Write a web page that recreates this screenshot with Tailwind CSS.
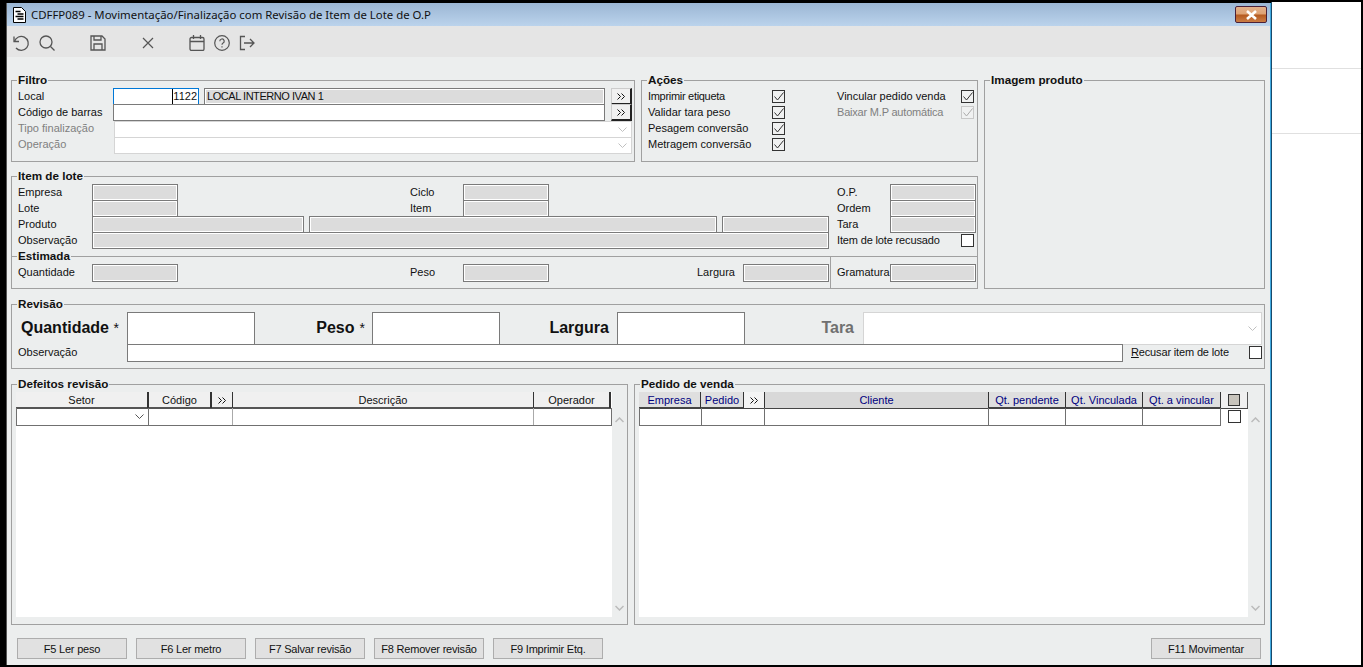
<!DOCTYPE html>
<html lang="pt-BR">
<head>
  <meta charset="UTF-8">
  <title>CDFFP089</title>
  <script src="https://cdn.jsdelivr.net/npm/@tailwindcss/browser@4"></script>
</head>
<body class="h-screen overflow-hidden bg-black pt-[3px] pb-[2px] pl-[6px] pr-[2px] font-['Liberation_Sans',sans-serif] text-[11px] text-[#111]">
  <div class="flex h-full">
    <!-- Window -->
    <div class="flex flex-col w-[1265px] h-full bg-[#eceeee] border-l border-[#555] border-r border-r-[#3fa9e0]">
      <!-- Title bar -->
      <div class="flex items-center h-[23px] shrink-0 bg-gradient-to-b from-[#9bb6d4] to-[#bbd3ec] pl-[6px] pr-[3px]">
        <svg class="w-[13px] h-[16px] mr-[5px]" viewBox="0 0 13 16"><path d="M.5.500h8l4 4v11h-12z" fill="#fff" stroke="#000"/><path d="M2.500 4.500h5M4.500 7h6M2.500 9.500h8M4.500 12h6" stroke="#000" stroke-width="1.300"/></svg>
        <span class="font-['Noto_Sans',sans-serif] text-[11.4px] text-[#111]">CDFFP089 - Movimentação/Finalização com Revisão de Item de Lote de O.P</span>
        <div class="ml-auto flex items-center justify-center w-[32px] h-[17px] rounded-[2px] border border-[#4a2038] bg-[linear-gradient(#e2b08c_0%,#dfa273_48%,#b4591f_52%,#cb7d45_100%)]">
          <svg class="w-[13px] h-[10px]" viewBox="0 0 13 10"><path d="M2 1l9 8M11 1l-9 8" stroke="#fff" stroke-width="2.600"/></svg>
        </div>
      </div>
      <!-- Toolbar -->
      <div class="flex items-center h-[31px] shrink-0 bg-[#e5e5e5] pl-[5px] pt-[2px] text-[#555]">
        <svg class="w-[18px] h-[18px]" viewBox="0 0 18 18" fill="none" stroke="currentColor" stroke-width="1.300"><path d="M2 2.500v5h5"/><path d="M2.500 7.500A7 7 0 1 1 4 14"/></svg>
        <svg class="w-[18px] h-[18px] ml-[8px]" viewBox="0 0 18 18" fill="none" stroke="currentColor" stroke-width="1.300"><circle cx="8" cy="8" r="6"/><path d="M12.500 12.500l4 4"/></svg>
        <svg class="w-[16px] h-[16px] ml-[34px]" viewBox="0 0 16 16" fill="none" stroke="currentColor" stroke-width="1.300"><path d="M1 1h11l3 3v11H1z"/><path d="M4 1v4h7V1M4 15V9h8v6"/></svg>
        <svg class="w-[14px] h-[14px] ml-[35px]" viewBox="0 0 14 14" fill="none" stroke="currentColor" stroke-width="1.200"><path d="M2 2l10 10M12 2L2 12"/></svg>
        <svg class="w-[16px] h-[16px] ml-[34px]" viewBox="0 0 16 16" fill="none" stroke="currentColor" stroke-width="1.300"><rect x="1" y="2.500" width="14" height="13" rx="1.500"/><path d="M1 6.500h14M4.500 0v4M11.500 0v4"/></svg>
        <svg class="w-[16px] h-[16px] ml-[9px]" viewBox="0 0 16 16" fill="none" stroke="currentColor" stroke-width="1.200"><circle cx="8" cy="8" r="7.300"/><path d="M5.800 6.200a2.200 2.200 0 1 1 3.300 1.900c-.7.400-1.100.8-1.100 1.700"/><path d="M8 11.300v1.200"/></svg>
        <svg class="w-[16px] h-[16px] ml-[9px]" viewBox="0 0 16 16" fill="none" stroke="currentColor" stroke-width="1.300"><path d="M6 1.500H1.500v13H6"/><path d="M5 8h10M11 4l4 4-4 4"/></svg>
      </div>

      <!-- Main -->
      <div class="flex-1 pt-[23px] pl-[4px] flex flex-col">
        <div class="flex gap-[6px]">
          <div class="w-[967px]">
            <div class="flex gap-[6px]">
              <!-- Filtro -->
              <div class="relative w-[624px] h-[82px] border border-[#a0a0a0] pt-[7px] pl-[6px]">
                <span class="absolute -top-[8px] left-[5px] bg-[#eceeee] px-px font-bold text-[11.700px] leading-[13px]">Filtro</span>
                <div class="flex h-[16px] items-start">
                  <span class="w-[95px] leading-[16px]">Local</span>
                  <div class="flex justify-end w-[86px] h-[17px] bg-white border border-[#0078d7] pr-[1px] leading-[15px]"><span class="border-l border-black">1122</span></div>
                  <div class="ml-[5px] w-[401px] h-[17px] bg-[#dcdcdc] border border-[#7a7a7a] shadow-[inset_0_0_0_1px_#fff] pl-[2px] leading-[15px] tracking-[-0.450px]">LOCAL INTERNO IVAN 1</div>
                  <div class="flex items-center justify-center ml-[6px] w-[21px] h-[17px] bg-[#f0f0f0] border-t border-l border-[#ccc] border-r-2 border-b-2 border-r-[#222] border-b-[#222]">
                    <svg class="w-[8px] h-[7px]" viewBox="0 0 8 7" fill="none" stroke="#111"><path d="M.5.500l3 3-3 3M4.500.500l3 3-3 3"/></svg>
                  </div>
                </div>
                <div class="flex h-[16px] items-start">
                  <span class="w-[95px] leading-[16px]">Código de barras</span>
                  <div class="w-[492px] h-[17px] bg-white border border-[#7a7a7a]"></div>
                  <div class="flex items-center justify-center ml-[6px] w-[21px] h-[17px] bg-[#f0f0f0] border-t border-l border-[#ccc] border-r-2 border-b-2 border-r-[#222] border-b-[#222]">
                    <svg class="w-[8px] h-[7px]" viewBox="0 0 8 7" fill="none" stroke="#111"><path d="M.5.500l3 3-3 3M4.500.500l3 3-3 3"/></svg>
                  </div>
                </div>
                <div class="flex h-[16px] mt-px items-start text-[#808080]">
                  <span class="w-[96px] leading-[14px]">Tipo finalização</span>
                  <div class="flex items-center justify-end w-[518px] h-[17px] bg-white border border-[#d5d5d5] pr-[4px]">
                    <svg class="w-[9px] h-[5px]" viewBox="0 0 9 5" fill="none" stroke="#c0c0c0"><path d="M.5.500l4 4 4-4"/></svg>
                  </div>
                </div>
                <div class="flex h-[16px] items-start text-[#808080]">
                  <span class="w-[96px] leading-[14px]">Operação</span>
                  <div class="flex items-center justify-end w-[518px] h-[17px] bg-white border border-[#d5d5d5] pr-[4px]">
                    <svg class="w-[9px] h-[5px]" viewBox="0 0 9 5" fill="none" stroke="#c0c0c0"><path d="M.5.500l4 4 4-4"/></svg>
                  </div>
                </div>
              </div>
              <!-- Acoes -->
              <div class="relative w-[337px] h-[82px] border border-[#a0a0a0] pt-[7px] pl-[6px]">
                <span class="absolute -top-[8px] left-[5px] bg-[#eceeee] px-px font-bold text-[11.700px] leading-[13px]">Ações</span>
                <div class="flex h-[16px] items-center">
                  <span class="w-[124px] tracking-[-0.300px]">Imprimir etiqueta</span>
                  <div class="flex items-center justify-center w-[13px] h-[13px] bg-[#f0f1f1] border border-[#333]"><svg class="w-[10px] h-[9px]" viewBox="0 0 10 9" fill="none" stroke="#333"><path d="M.5 4.500l3 3.500L9.500.500"/></svg></div>
                  <span class="ml-[52px] w-[124px]">Vincular pedido venda</span>
                  <div class="flex items-center justify-center w-[13px] h-[13px] bg-[#f0f1f1] border border-[#333]"><svg class="w-[10px] h-[9px]" viewBox="0 0 10 9" fill="none" stroke="#333"><path d="M.5 4.500l3 3.500L9.500.500"/></svg></div>
                </div>
                <div class="flex h-[16px] items-center">
                  <span class="w-[124px]">Validar tara peso</span>
                  <div class="flex items-center justify-center w-[13px] h-[13px] bg-[#f0f1f1] border border-[#333]"><svg class="w-[10px] h-[9px]" viewBox="0 0 10 9" fill="none" stroke="#333"><path d="M.5 4.500l3 3.500L9.500.500"/></svg></div>
                  <span class="ml-[52px] w-[124px] text-[#808080] tracking-[-0.200px]">Baixar M.P automática</span>
                  <div class="flex items-center justify-center w-[13px] h-[13px] bg-[#f0f1f1] border border-[#c8c8c8]"><svg class="w-[10px] h-[9px]" viewBox="0 0 10 9" fill="none" stroke="#aaa"><path d="M.5 4.500l3 3.500L9.500.500"/></svg></div>
                </div>
                <div class="flex h-[16px] items-center">
                  <span class="w-[124px]">Pesagem conversão</span>
                  <div class="flex items-center justify-center w-[13px] h-[13px] bg-[#f0f1f1] border border-[#333]"><svg class="w-[10px] h-[9px]" viewBox="0 0 10 9" fill="none" stroke="#333"><path d="M.5 4.500l3 3.500L9.500.500"/></svg></div>
                </div>
                <div class="flex h-[16px] items-center">
                  <span class="w-[124px]">Metragem conversão</span>
                  <div class="flex items-center justify-center w-[13px] h-[13px] bg-[#f0f1f1] border border-[#333]"><svg class="w-[10px] h-[9px]" viewBox="0 0 10 9" fill="none" stroke="#333"><path d="M.5 4.500l3 3.500L9.500.500"/></svg></div>
                </div>
              </div>
            </div>

            <!-- Item de lote -->
            <div class="relative mt-[14px] h-[113px] border border-[#a0a0a0]">
              <span class="absolute -top-[8px] left-[5px] bg-[#eceeee] px-px font-bold text-[11.700px] leading-[13px]">Item de lote</span>
              <div class="pt-[7px] pl-[6px] h-[79px]">
                <div class="flex h-[16px] items-start">
                  <span class="w-[74px] leading-[16px]">Empresa</span>
                  <div class="w-[86px] h-[17px] bg-[#dcdcdc] border border-[#7a7a7a] shadow-[inset_0_0_0_1px_#fff]"></div>
                  <span class="ml-[232px] w-[53px] leading-[16px]">Ciclo</span>
                  <div class="w-[86px] h-[17px] bg-[#dcdcdc] border border-[#7a7a7a] shadow-[inset_0_0_0_1px_#fff]"></div>
                  <span class="ml-[288px] w-[53px] leading-[16px]">O.P.</span>
                  <div class="w-[86px] h-[17px] bg-[#dcdcdc] border border-[#7a7a7a] shadow-[inset_0_0_0_1px_#fff]"></div>
                </div>
                <div class="flex h-[16px] items-start">
                  <span class="w-[74px] leading-[16px]">Lote</span>
                  <div class="w-[86px] h-[17px] bg-[#dcdcdc] border border-[#7a7a7a] shadow-[inset_0_0_0_1px_#fff]"></div>
                  <span class="ml-[232px] w-[53px] leading-[16px]">Item</span>
                  <div class="w-[86px] h-[17px] bg-[#dcdcdc] border border-[#7a7a7a] shadow-[inset_0_0_0_1px_#fff]"></div>
                  <span class="ml-[288px] w-[53px] leading-[16px]">Ordem</span>
                  <div class="w-[86px] h-[17px] bg-[#dcdcdc] border border-[#7a7a7a] shadow-[inset_0_0_0_1px_#fff]"></div>
                </div>
                <div class="flex h-[16px] items-start">
                  <span class="w-[74px] leading-[16px]">Produto</span>
                  <div class="w-[212px] h-[17px] bg-[#dcdcdc] border border-[#7a7a7a] shadow-[inset_0_0_0_1px_#fff]"></div>
                  <div class="ml-[5px] w-[408px] h-[17px] bg-[#dcdcdc] border border-[#7a7a7a] shadow-[inset_0_0_0_1px_#fff]"></div>
                  <div class="ml-[5px] w-[107px] h-[17px] bg-[#dcdcdc] border border-[#7a7a7a] shadow-[inset_0_0_0_1px_#fff]"></div>
                  <span class="ml-[8px] w-[53px] leading-[16px]">Tara</span>
                  <div class="w-[86px] h-[17px] bg-[#dcdcdc] border border-[#7a7a7a] shadow-[inset_0_0_0_1px_#fff]"></div>
                </div>
                <div class="flex h-[17px] items-start">
                  <span class="w-[74px] leading-[17px]">Observação</span>
                  <div class="w-[737px] h-[17px] bg-[#dcdcdc] border border-[#7a7a7a] shadow-[inset_0_0_0_1px_#fff]"></div>
                  <span class="ml-[8px] w-[124px] leading-[17px] tracking-[-0.150px]">Item de lote recusado</span>
                  <div class="mt-[2px] w-[13px] h-[13px] bg-white border border-[#333]"></div>
                </div>
              </div>
              <!-- Estimada -->
              <div class="relative flex h-[32px] border-t border-[#a0a0a0]">
                <span class="absolute -top-[8px] left-[5px] bg-[#eceeee] px-px font-bold text-[11.700px] leading-[13px]">Estimada</span>
                <div class="flex items-center w-[819px] border-r border-[#a0a0a0] pl-[6px] pt-px">
                  <span class="w-[74px] pb-[2px]">Quantidade</span>
                  <div class="w-[86px] h-[18px] bg-[#dcdcdc] border border-[#7a7a7a] shadow-[inset_0_0_0_1px_#fff]"></div>
                  <span class="ml-[232px] w-[53px] pb-[2px]">Peso</span>
                  <div class="w-[86px] h-[18px] bg-[#dcdcdc] border border-[#7a7a7a] shadow-[inset_0_0_0_1px_#fff]"></div>
                  <span class="ml-[148px] w-[46px] pb-[2px]">Largura</span>
                  <div class="w-[86px] h-[18px] bg-[#dcdcdc] border border-[#7a7a7a] shadow-[inset_0_0_0_1px_#fff]"></div>
                </div>
                <div class="flex items-center pl-[6px] pt-px">
                  <span class="w-[53px] pb-[2px]">Gramatura</span>
                  <div class="w-[86px] h-[18px] bg-[#dcdcdc] border border-[#7a7a7a] shadow-[inset_0_0_0_1px_#fff]"></div>
                </div>
              </div>
            </div>
          </div>
          <!-- Imagem -->
          <div class="relative w-[281px] h-[209px] border border-[#a0a0a0]">
            <span class="absolute -top-[8px] left-[5px] bg-[#eceeee] px-px font-bold text-[11.700px] leading-[13px]">Imagem produto</span>
          </div>
        </div>

        <!-- Revisao -->
        <div class="relative mt-[15px] w-[1254px] h-[65px] border border-[#a0a0a0] pt-[7px] pl-[6px]">
          <span class="absolute -top-[8px] left-[5px] bg-[#eceeee] px-px font-bold text-[11.700px] leading-[13px]">Revisão</span>
          <div class="flex items-center h-[32px]">
            <span class="w-[109px] pl-[3px] text-[16px] font-bold whitespace-nowrap">Quantidade <span class="text-[14px] font-normal">*</span></span>
            <div class="w-[128px] h-[33px] bg-white border border-[#7a7a7a]"></div>
            <span class="w-[117px] pr-[7px] text-right text-[16px] font-bold">Peso<span class="ml-[5px] text-[14px] font-normal">*</span></span>
            <div class="w-[128px] h-[33px] bg-white border border-[#7a7a7a]"></div>
            <span class="w-[117px] pr-[8px] text-right text-[16px] font-bold">Largura</span>
            <div class="w-[128px] h-[33px] bg-white border border-[#7a7a7a]"></div>
            <span class="w-[118px] pr-[9px] text-right text-[16px] font-bold text-[#707070]">Tara</span>
            <div class="flex items-center justify-end w-[399px] h-[33px] bg-white border border-[#d5d5d5] pr-[4px]">
              <svg class="w-[9px] h-[5px]" viewBox="0 0 9 5" fill="none" stroke="#c0c0c0"><path d="M.5.500l4 4 4-4"/></svg>
            </div>
          </div>
          <div class="flex items-center h-[17px]">
            <span class="w-[109px]">Observação</span>
            <div class="w-[996px] h-[18px] bg-white border border-[#7a7a7a]"></div>
            <span class="ml-[8px] w-[118px] tracking-[-0.150px]"><span class="underline">R</span>ecusar item de lote</span>
            <div class="w-[13px] h-[13px] bg-white border border-[#333]"></div>
          </div>
        </div>

        <!-- Grids -->
        <div class="flex gap-[6px] mt-[15px]">
          <!-- Defeitos -->
          <div class="relative flex w-[617px] h-[241px] border border-[#a0a0a0] pt-[7px] pl-[4px]">
            <span class="absolute -top-[8px] left-[5px] bg-[#eceeee] px-px font-bold text-[11.700px] leading-[13px]">Defeitos revisão</span>
            <div class="w-[596px] h-[225px] bg-white">
              <div class="grid grid-cols-[133px_63px_21px_301px_77px] w-[595px] h-[17px] text-center leading-[16px] bg-[#f0f0f0] border-b-2 border-[#555]">
                <div class="border-r-2 border-[#333]">Setor</div>
                <div class="border-r-2 border-[#333]">Código</div>
                <div class="flex items-center justify-center border-r border-[#333]">
                  <svg class="w-[8px] h-[7px]" viewBox="0 0 8 7" fill="none" stroke="#111"><path d="M.5.500l3 3-3 3M4.500.500l3 3-3 3"/></svg>
                </div>
                <div class="border-r border-[#333]">Descrição</div>
                <div class="border-r-2 border-[#333]">Operador</div>
              </div>
              <div class="grid grid-cols-[133px_84px_301px_78px] h-[18px] border-b border-[#707070] -mt-px">
                <div class="flex items-center justify-end pr-[4px] border-x border-[#707070]">
                  <svg class="w-[9px] h-[5px]" viewBox="0 0 9 5" fill="none" stroke="#555"><path d="M.5.500l4 4 4-4"/></svg>
                </div>
                <div class="border-r border-[#aaa]"></div>
                <div class="border-r border-[#aaa]"></div>
                <div class="border-r border-[#707070]"></div>
              </div>
            </div>
            <div class="flex flex-col items-center justify-between w-[15px] h-[225px] pt-[25px] pb-[6px]">
              <svg class="w-[9px] h-[6px]" viewBox="0 0 9 6" fill="none" stroke="#bbb" stroke-width="1.500"><path d="M.5 5l4-4 4 4"/></svg>
              <svg class="w-[9px] h-[6px]" viewBox="0 0 9 6" fill="none" stroke="#bbb" stroke-width="1.500"><path d="M.5 1l4 4 4-4"/></svg>
            </div>
          </div>
          <!-- Pedido -->
          <div class="relative flex w-[631px] h-[241px] border border-[#a0a0a0] pt-[7px] pl-[4px]">
            <span class="absolute -top-[8px] left-[5px] bg-[#eceeee] px-px font-bold text-[11.700px] leading-[13px]">Pedido de venda</span>
            <div class="w-[609px] h-[225px] bg-white">
              <div class="grid grid-cols-[62px_43px_21px_224px_77px_77px_78px_27px] h-[17px] text-center leading-[16px] text-[#000080] bg-[#dfdfdf] border-b-2 border-[#444]">
                <div class="border-r border-[#333]">Empresa</div>
                <div class="border-r border-[#333]">Pedido</div>
                <div class="flex items-center justify-center border-r border-[#333] bg-[#f4f4f4]">
                  <svg class="w-[8px] h-[7px]" viewBox="0 0 8 7" fill="none" stroke="#111"><path d="M.5.500l3 3-3 3M4.500.500l3 3-3 3"/></svg>
                </div>
                <div class="border-r border-[#333] bg-[#d8d8d8]">Cliente</div>
                <div class="border-r border-[#333]">Qt. pendente</div>
                <div class="border-r border-[#333]">Qt. Vinculada</div>
                <div class="border-r border-[#333]">Qt. a vincular</div>
                <div class="flex justify-center items-start pt-[2px] bg-[#f0f0f0] border-r border-[#555]"><div class="w-[12px] h-[12px] bg-[#c8c4bc] border border-[#333]"></div></div>
              </div>
              <div class="grid grid-cols-[63px_63px_224px_77px_77px_78px_27px] h-[18px] -mt-px">
                <div class="border-x border-b border-[#707070]"></div>
                <div class="border-r border-b border-[#707070]"></div>
                <div class="border-r border-b border-[#707070]"></div>
                <div class="border-r border-b border-[#707070]"></div>
                <div class="border-r border-b border-[#707070]"></div>
                <div class="border-r border-b border-[#707070]"></div>
                <div class="flex justify-center"><div class="mt-[2px] w-[13px] h-[13px] bg-white border border-[#333]"></div></div>
              </div>
            </div>
            <div class="flex flex-col items-center justify-between w-[15px] h-[225px] pt-[25px] pb-[6px]">
              <svg class="w-[9px] h-[6px]" viewBox="0 0 9 6" fill="none" stroke="#bbb" stroke-width="1.500"><path d="M.5 5l4-4 4 4"/></svg>
              <svg class="w-[9px] h-[6px]" viewBox="0 0 9 6" fill="none" stroke="#bbb" stroke-width="1.500"><path d="M.5 1l4 4 4-4"/></svg>
            </div>
          </div>
        </div>

        <!-- Buttons -->
        <div class="flex gap-[9px] mt-[13px] pl-[6px] w-[1250px] tracking-[-0.200px]">
          <button class="w-[110px] h-[21px] pt-px bg-[#e1e1e1] border border-[#adadad]">F5 Ler peso</button>
          <button class="w-[110px] h-[21px] pt-px bg-[#e1e1e1] border border-[#adadad]">F6 Ler metro</button>
          <button class="w-[110px] h-[21px] pt-px bg-[#e1e1e1] border border-[#adadad]">F7 Salvar revisão</button>
          <button class="w-[110px] h-[21px] pt-px bg-[#e1e1e1] border border-[#adadad]">F8 Remover revisão</button>
          <button class="w-[110px] h-[21px] pt-px bg-[#e1e1e1] border border-[#adadad]">F9 Imprimir Etq.</button>
          <button class="ml-auto w-[110px] h-[21px] pt-px bg-[#e1e1e1] border border-[#adadad]">F11 Movimentar</button>
        </div>
      </div>
    </div>

    <!-- Page behind the window -->
    <div class="flex-1 bg-white border-l border-[#1a4a6a] -mt-px">
      <div class="h-[67px] border-b border-[#e0e0e0]"></div>
      <div class="h-[65px] border-b border-[#e0e0e0]"></div>
    </div>
  </div>
</body>
</html>
